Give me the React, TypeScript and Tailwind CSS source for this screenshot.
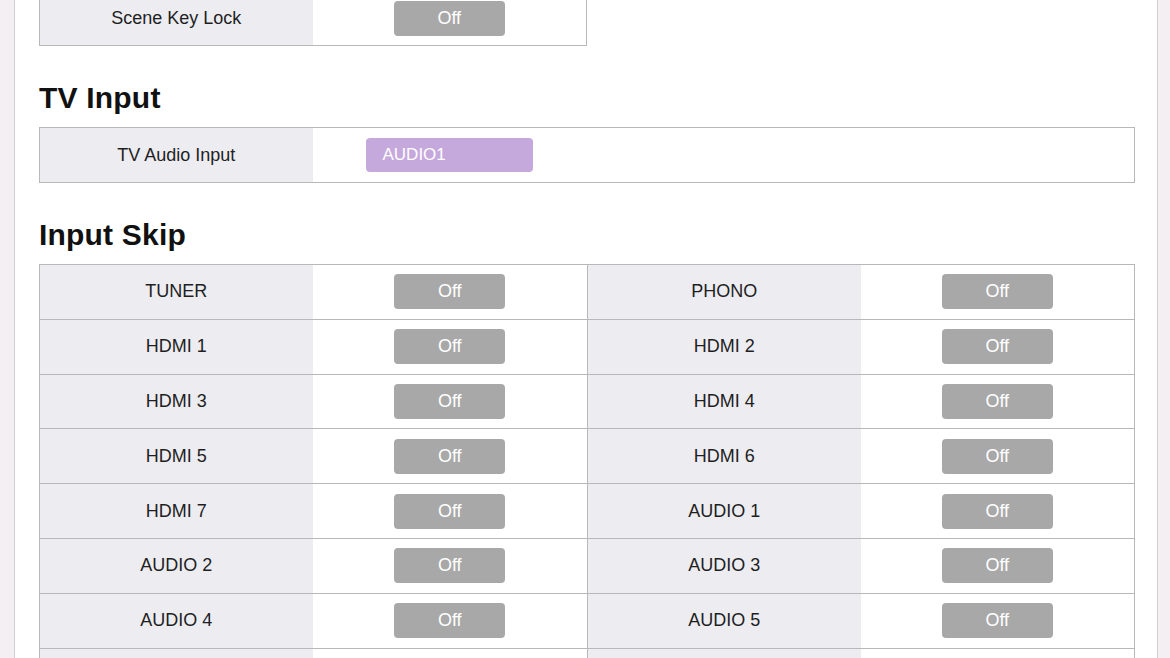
const skipRows: [string, string][] = [
  ["TUNER", "PHONO"],
  ["HDMI 1", "HDMI 2"],
  ["HDMI 3", "HDMI 4"],
  ["HDMI 5", "HDMI 6"],
  ["HDMI 7", "AUDIO 1"],
  ["AUDIO 2", "AUDIO 3"],
  ["AUDIO 4", "AUDIO 5"],
  ["NET", "Bluetooth"],
];

const font = { fontFamily: '"Liberation Sans", Arial, sans-serif' };

function OffButton() {
  return (
    <div className="mx-auto w-[111px] h-[35px] rounded-[4px] bg-[#a8a8a8] text-white text-[18px] flex items-center justify-center">
      Off
    </div>
  );
}

// label cell: no line between label and its value cell
function LabelCell({ children }: { children: React.ReactNode }) {
  return (
    <td className="border border-[#b8b8b8] [border-right-style:hidden] bg-[#ececf1] text-center text-[18px] text-[#1f1f1f] p-0">
      {children}
    </td>
  );
}

function ValueCell({ children }: { children: React.ReactNode }) {
  return <td className="border border-[#b8b8b8] bg-white p-0">{children}</td>;
}

function Heading({ children }: { children: React.ReactNode }) {
  return (
    <h2 className="text-[30px] leading-[34px] font-bold tracking-[0.2px] text-[#111] mt-[35px] mb-[12px]">
      {children}
    </h2>
  );
}

export default function App() {
  return (
    <div className="h-[658px] overflow-hidden flex bg-[#f3eff2]" style={font}>
      <div className="w-[15px] shrink-0 border-r border-[#cfcfcf]" />
      <div className="w-[1142px] shrink-0 bg-white pl-[24px]">
        {/* Scene key lock (tail of previous section) */}
        <table className="-mt-[10px] w-[548px] table-fixed border-collapse">
          <colgroup>
            <col className="w-[273px]" />
            <col />
          </colgroup>
          <tbody>
            <tr className="h-[55px]">
              <LabelCell>Scene Key Lock</LabelCell>
              <ValueCell>
                <OffButton />
              </ValueCell>
            </tr>
          </tbody>
        </table>

        <Heading>TV Input</Heading>
        <table className="w-[1096px] table-fixed border-collapse">
          <colgroup>
            <col className="w-[273px]" />
            <col />
          </colgroup>
          <tbody>
            <tr className="h-[55px]">
              <LabelCell>TV Audio Input</LabelCell>
              <ValueCell>
                <div className="ml-[53px] w-[167px] h-[34px] rounded-[4px] bg-[#c6a9dc] text-white text-[17px] flex items-center pl-[17px]">
                  AUDIO1
                </div>
              </ValueCell>
            </tr>
          </tbody>
        </table>

        <Heading>Input Skip</Heading>
        <table className="w-[1096px] table-fixed border-collapse">
          <colgroup>
            <col className="w-[273px]" />
            <col className="w-[275px]" />
            <col className="w-[273px]" />
            <col />
          </colgroup>
          <tbody>
            {skipRows.map(([a, b]) => (
              <tr key={a} className="h-[54.8px]">
                <LabelCell>{a}</LabelCell>
                <ValueCell>
                  <OffButton />
                </ValueCell>
                <LabelCell>{b}</LabelCell>
                <ValueCell>
                  <OffButton />
                </ValueCell>
              </tr>
            ))}
          </tbody>
        </table>
      </div>
      <div className="flex-1 border-l border-[#cfcfcf]" />
    </div>
  );
}
